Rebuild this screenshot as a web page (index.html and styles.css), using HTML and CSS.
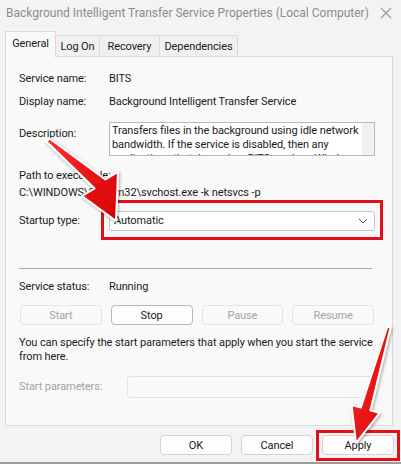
FILE: index.html
```html
<!DOCTYPE html>
<html lang="en">
<head>
    <meta charset="UTF-8">
    <title>Background Intelligent Transfer Service Properties</title>
    <link rel="stylesheet" href="styles.css">
</head>
<body>
    <div class="window">
        <!-- title bar -->
        <div class="titlebar">
            <span class="title">Background Intelligent Transfer Service Properties (Local Computer)</span>
            <svg class="close" width="12" height="12" viewBox="0 0 12 12">
                <path d="M1 1 L11 11 M11 1 L1 11" stroke="#9a9a9a" stroke-width="1.1" fill="none"/>
            </svg>
        </div>

        <!-- tabs -->
        <div class="tabs">
            <div class="tab active tab-general">General</div>
            <div class="tab tab-logon">Log On</div>
            <div class="tab tab-recovery">Recovery</div>
            <div class="tab tab-deps">Dependencies</div>
        </div>

        <!-- general page -->
        <div class="panel">
            <div class="row row-name">
                <span class="label">Service name:</span>
                <span>BITS</span>
            </div>
            <div class="row row-display">
                <span class="label">Display name:</span>
                <span>Background Intelligent Transfer Service</span>
            </div>
            <div class="row row-desc">
                <span class="label label-desc">Description:</span>
                <div class="desc-box">
                    <div class="desc-text">Transfers files in the background using idle network bandwidth. If the service is disabled, then any applications that depend on BITS, such as Windows Update or MSN Explorer, will be unable to automatically download programs and other information.</div>
                    <div class="desc-scroll"></div>
                </div>
            </div>
            <div class="path-label">Path to executable:</div>
            <div class="path-value">C:\WINDOWS\System32\svchost.exe -k netsvcs -p</div>
            <div class="row row-startup">
                <span class="label">Startup type:</span>
                <div class="combo">
                    <span>Automatic</span>
                    <svg width="10" height="6" viewBox="0 0 10 6">
                        <path d="M1 1 L5 5 L9 1" stroke="#555" stroke-width="1" fill="none"/>
                    </svg>
                </div>
            </div>
            <div class="separator"></div>
            <div class="row row-status">
                <span class="label">Service status:</span>
                <span>Running</span>
            </div>
            <div class="service-buttons">
                <button class="btn" disabled>Start</button>
                <button class="btn btn-strong">Stop</button>
                <button class="btn" disabled>Pause</button>
                <button class="btn" disabled>Resume</button>
            </div>
            <p class="hint">You can specify the start parameters that apply when you start the service<br>from here.</p>
            <div class="row row-params">
                <span class="label label-params">Start parameters:</span>
                <div class="params-box"></div>
            </div>
        </div>

        <!-- dialog buttons -->
        <div class="footer">
            <button class="btn dlg-btn">OK</button>
            <button class="btn dlg-btn">Cancel</button>
            <button class="btn dlg-btn">Apply</button>
        </div>

        <!-- annotations drawn over the dialog -->
        <svg class="marks" width="401" height="464" viewBox="0 0 401 464">
            <defs>
                <linearGradient id="redFill" x1="0" y1="0" x2="1" y2="1">
                    <stop offset="0" stop-color="#ff3030"/>
                    <stop offset="1" stop-color="#d40000"/>
                </linearGradient>
                <filter id="shadow" x="-20%" y="-20%" width="140%" height="140%">
                    <feDropShadow dx="1" dy="1.5" stdDeviation="1.5" flood-color="#000" flood-opacity="0.35"/>
                </filter>
            </defs>
            <rect x="102.5" y="201.5" width="279" height="37" fill="none" stroke="#e0101a" stroke-width="3"/>
            <rect x="317.5" y="431.5" width="81" height="28" fill="none" stroke="#e0101a" stroke-width="3"/>
            <polygon filter="url(#shadow)" fill="url(#redFill)" stroke="#fff" stroke-width="2" stroke-linejoin="round"
                points="46.5,141.5 94.6,188.5 82,196 116,221 118,172 105.4,179.5 49.5,138.5"/>
            <polygon filter="url(#shadow)" fill="url(#redFill)" stroke="#fff" stroke-width="2" stroke-linejoin="round"
                points="390.6,327.5 370.4,410.4 379.5,413 356,443 351.6,405 360.8,407.6 387.4,326.5"/>
        </svg>
    </div>
</body>
</html>
```

FILE: styles.css
```css
body {
    margin: 0;
    background-color: #f3f3f3;
    font-family: Roboto, 'Liberation Sans', sans-serif;
    font-size: 11px;
    letter-spacing: -0.1px;
    color: #1b1b1b;
}

.window {
    position: relative;
    width: 401px;
    height: 464px;
    box-sizing: border-box;
    border-bottom: 2px solid #9c9c9c;
    overflow: hidden;
}

.titlebar {
    height: 25px;
    display: flex;
    align-items: center;
    justify-content: space-between;
    padding: 0 9px 0 6px;
    color: #8c8c8c;
    font-size: 12px;
    letter-spacing: 0;
    white-space: nowrap;
}

.tabs {
    height: 31px;
    display: flex;
    align-items: flex-end;
    margin-left: 5px;
}

.tab {
    height: 21px;
    box-sizing: border-box;
    display: flex;
    align-items: center;
    justify-content: center;
    border: 1px solid #dadada;
    border-bottom: none;
    border-left: none;
    background-color: #f0f0f0;
}

.tab.active {
    height: 26px;
    margin-bottom: -1px;
    border-left: 1px solid #dadada;
    background-color: #f9f9f9;
    position: relative;
    z-index: 1;
    padding-bottom: 3px;
}

.tab-general { width: 51px; }
.tab-logon { width: 44px; }
.tab-recovery { width: 60px; }
.tab-deps { width: 78px; }

.panel {
    height: 370px;
    box-sizing: border-box;
    margin: 0 8px 0 5px;
    padding: 14px 17px 0 13px;
    border: 1px solid #dadada;
    background-color: #f9f9f9;
}

.row {
    display: flex;
    align-items: center;
    line-height: 16px;
}

.label {
    width: 90px;
    flex: none;
}

.row-display { margin-top: 7px; }

.row-desc {
    margin-top: 12px;
    align-items: flex-start;
}

.label-desc { padding-top: 4px; }

.desc-box {
    display: flex;
    width: 266px;
    height: 34px;
    box-sizing: border-box;
    border: 1px solid #b9b9b9;
    background-color: #fff;
    overflow: hidden;
}

.desc-text {
    flex: 1;
    padding: 1px 2px;
    line-height: 14px;
}

.desc-scroll {
    width: 12px;
    flex: none;
    background-color: #f0f0f0;
}

.path-label {
    margin-top: 12px;
    line-height: 16px;
}

.path-value {
    margin-top: 1px;
    line-height: 16px;
}

.row-startup { margin-top: 10px; }

.combo {
    width: 266px;
    height: 20px;
    box-sizing: border-box;
    display: flex;
    align-items: center;
    justify-content: space-between;
    padding: 0 6px 0 4px;
    border: 1px solid #c6c6c6;
    border-radius: 3px;
    background-color: #fff;
}

.separator {
    width: 353px;
    height: 1px;
    margin-top: 37px;
    background-color: #a9a9a9;
}

.row-status { margin-top: 10px; }

.service-buttons {
    display: grid;
    grid-template-columns: repeat(4, 1fr);
    gap: 9px;
    width: 354px;
    margin: 10px 0 0 1px;
}

.btn {
    height: 20px;
    padding: 0;
    font-family: inherit;
    font-size: 11px;
    letter-spacing: inherit;
    color: #1b1b1b;
    background-color: #fdfdfd;
    border: 1px solid #d3d3d3;
    border-radius: 4px;
}

.btn-strong { border-color: #b8b8b8; }

.btn:disabled {
    color: #a3a3a3;
    background-color: #f9f9f9;
    border-color: #e3e3e3;
}

.hint {
    margin: 11px 0 0;
    line-height: 14px;
}

.row-params { margin-top: 12px; }

.label-params {
    width: 108px;
    color: #a3a3a3;
}

.params-box {
    width: 248px;
    height: 22px;
    box-sizing: border-box;
    border: 1px solid #e3e3e3;
    border-radius: 3px;
    background-color: #f9f9f9;
}

.footer {
    display: flex;
    justify-content: flex-end;
    gap: 9px;
    padding: 9px 7px 0 0;
}

.dlg-btn { width: 72px; }

.marks {
    position: absolute;
    left: 0;
    top: 0;
    pointer-events: none;
}
```
